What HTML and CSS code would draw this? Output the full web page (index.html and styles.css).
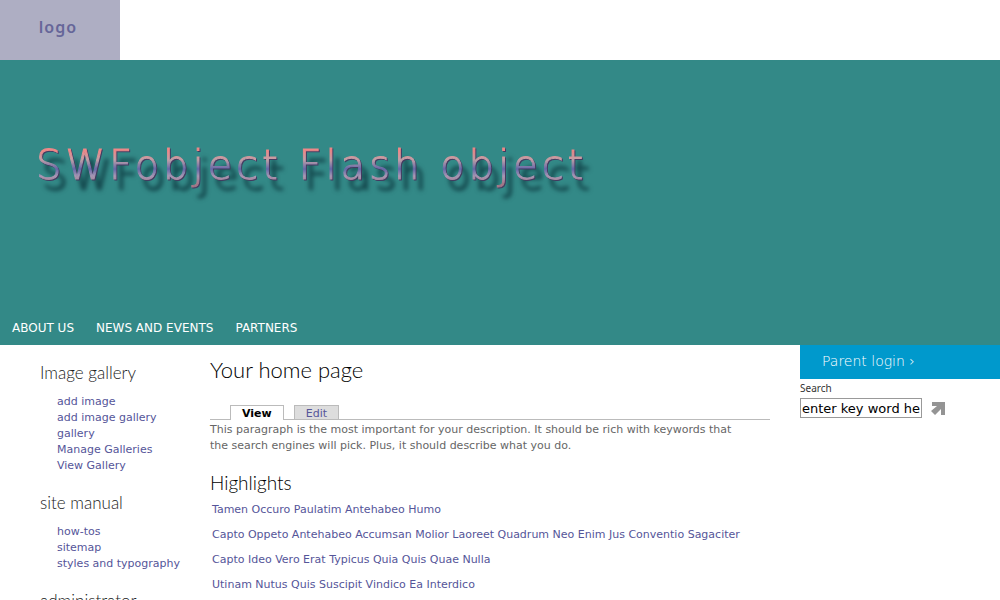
FILE: index.html
```html
<!DOCTYPE html>
<html lang="en">
<head>
<meta charset="utf-8">
<title>Your home page</title>
<link rel="stylesheet" href="styles.css">
</head>
<body>
<header class="masthead"><a class="logo" href="#">logo</a></header>
<section class="hero">
  <div class="hero-title">SWFobject Flash object</div>
  <nav class="main-nav">
    <a href="#">ABOUT US</a>
    <a href="#">NEWS AND EVENTS</a>
    <a href="#">PARTNERS</a>
  </nav>
</section>
<div class="columns">
  <aside class="sidebar">
    <h2>Image gallery</h2>
    <ul>
      <li><a href="#">add image</a></li>
      <li><a href="#">add image gallery</a></li>
      <li><a href="#">gallery</a></li>
      <li><a href="#">Manage Galleries</a></li>
      <li><a href="#">View Gallery</a></li>
    </ul>
    <h2>site manual</h2>
    <ul>
      <li><a href="#">how-tos</a></li>
      <li><a href="#">sitemap</a></li>
      <li><a href="#">styles and typography</a></li>
    </ul>
    <h2>administrator</h2>
  </aside>
  <main class="content">
    <h1>Your home page</h1>
    <nav class="tabs">
      <a class="tab active" href="#">View</a>
      <a class="tab" href="#">Edit</a>
    </nav>
    <p>This paragraph is the most important for your description. It should be rich with keywords that the search engines will pick. Plus, it should describe what you do.</p>
    <h2>Highlights</h2>
    <ul class="highlights">
      <li><a href="#">Tamen Occuro Paulatim Antehabeo Humo</a></li>
      <li><a href="#">Capto Oppeto Antehabeo Accumsan Molior Laoreet Quadrum Neo Enim Jus Conventio Sagaciter</a></li>
      <li><a href="#">Capto Ideo Vero Erat Typicus Quia Quis Quae Nulla</a></li>
      <li><a href="#">Utinam Nutus Quis Suscipit Vindico Ea Interdico</a></li>
    </ul>
  </main>
  <aside class="tools">
    <a class="login" href="#">Parent login ›</a>
    <form class="search">
      <label for="keyword">Search</label>
      <div class="search-row">
        <input id="keyword" type="text" value="enter key word here">
        <button type="submit" aria-label="Search">
          <svg width="14" height="14" viewBox="0 0 14 14"><path d="M1 1H14V14H10V8L4 14L0 10L6 5H1Z" fill="#949494"/></svg>
        </button>
      </div>
    </form>
  </aside>
</div>
</body>
</html>
```
FILE: styles.css
```css
* { box-sizing: border-box; }
html { overflow: hidden; }
body {
  margin: 0;
  background: #fff;
  color: #666;
  font: 11px/16px "DejaVu Sans", Verdana, sans-serif;
}
a { color: #559; text-decoration: none; }
h1, h2, ul, p { margin: 0; padding: 0; }
ul { list-style: none; }
h1, h2 { font-family: Lato, "Open Sans", sans-serif; font-weight: 300; }

.masthead { display: flex; }
.logo {
  width: 120px;
  height: 60px;
  padding-right: 4px;
  background: #aeaec3;
  color: #669;
  font: 600 16px/54px "Noto Sans", sans-serif;
  letter-spacing: 1px;
  text-align: center;
}

.hero {
  display: flex;
  flex-direction: column;
  justify-content: space-between;
  min-height: 285px;
  padding: 80px 12px 9px;
  background: #338987;
}
.hero-title {
  align-self: flex-start;
  margin-left: 24px;
  background: linear-gradient(#e88 22%, #c0a0a8 40%, #6468a8 58%, #a898b4 72%, #a67888 88%);
  background-clip: text;
  -webkit-background-clip: text;
  color: transparent;
  -webkit-text-stroke: 1px transparent;
  font: 200 40px/50px "DejaVu Sans", sans-serif;
  letter-spacing: 4px;
  filter: drop-shadow(1px 1px 0 #443a60) drop-shadow(6px 10px 2px rgba(0, 30, 40, 0.6));
}
.main-nav { display: flex; gap: 22px; font-size: 12px; }
.main-nav a { color: #fff; }

.columns { display: grid; grid-template-columns: 210px minmax(0, 1fr) 200px; }
.sidebar { padding: 16px 10px 0 40px; }
.sidebar h2 { color: #222; font-size: 17px; line-height: 24px; }
.sidebar ul { margin: 9px 0 17px 17px; }

.content { padding: 9px 30px 0 0; }
.content h1 { color: #000; font-size: 22px; line-height: 32px; }
.tabs {
  display: flex;
  gap: 10px;
  margin-top: 19px;
  padding-left: 20px;
  border-bottom: 1px solid #bbb;
}
.tab {
  height: 14px;
  padding: 0 11px;
  border: 1px solid #bbb;
  border-bottom: 0;
  background: #ddd;
  line-height: 15px;
}
.tab.active { margin-bottom: -1px; height: 15px; background: #fff; color: #000; font-weight: 700; }
.content p { margin-top: 2px; padding-right: 24px; }
.content h2 { margin-top: 17px; color: #000; font-size: 19px; line-height: 24px; }
.highlights { display: grid; gap: 9px; margin-top: 7px; padding-left: 2px; white-space: nowrap; }

.login {
  display: block;
  padding: 0 22px 1px;
  background: #09c;
  color: #fff;
  font-size: 14px;
  line-height: 33px;
  font-weight: 200;
}
.search label { display: block; color: #333; font: 10px/19px "Noto Sans", sans-serif; }
.search-row { display: flex; align-items: center; gap: 9px; }
.search input {
  width: 122px;
  height: 20px;
  padding: 0 1px;
  border: 1px solid #999;
  color: #000;
  font: 13px "DejaVu Sans", sans-serif;
}
.search button { display: flex; padding: 0; border: 0; background: none; }
```
